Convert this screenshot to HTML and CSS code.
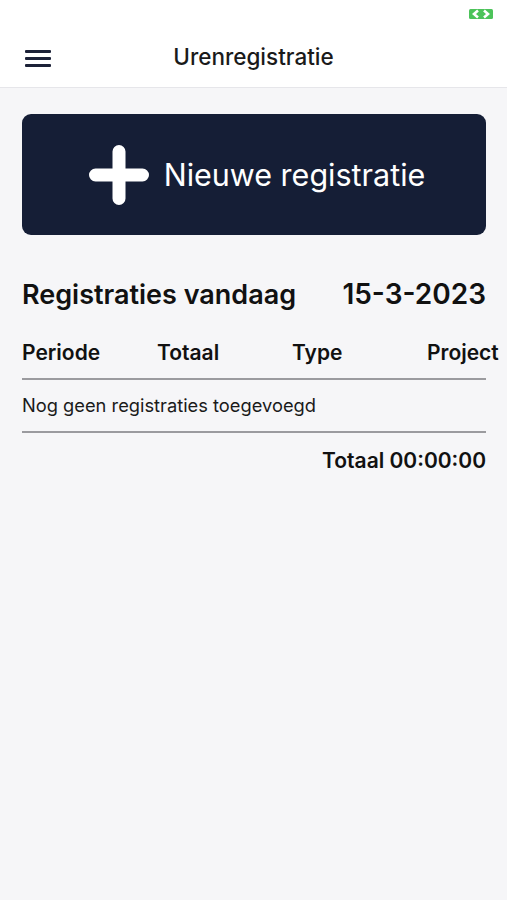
FILE: index.html
```html
<!DOCTYPE html>
<html lang="nl">
<head>
    <meta charset="UTF-8">
    <meta name="viewport" content="width=device-width, initial-scale=1.0">
    <title>Urenregistratie</title>
    <link rel="stylesheet" href="styles.css">
</head>
<body>
    <div id="statusbalk">
        <svg class="batterij" width="24" height="10" viewBox="0 0 24 10">
            <rect x="0" y="0" width="24" height="10" rx="1.5" fill="#4cc35a"/>
            <path d="M9 1.5 L5 5 L9 8.5 M15 1.5 L19 5 L15 8.5" stroke="#fff" stroke-width="2.6" fill="none"/>
        </svg>
    </div>
    <div id="kop">
        <div class="menu">
            <span></span><span></span><span></span>
        </div>
        <h1 id="titel">Urenregistratie</h1>
    </div>
    <div id="inhoud">
        <a id="nieuw">
            <svg class="plus" width="60" height="60" viewBox="0 0 60 60">
                <path d="M30 6.5 V53.5 M6.5 30 H53.5" stroke="#fff" stroke-width="13" stroke-linecap="round"/>
            </svg>
            <span>Nieuwe registratie</span>
        </a>

        <div id="dag">
            <h2>Registraties vandaag</h2>
            <span id="datum">15-3-2023</span>
        </div>

        <div id="kolommen">
            <span>Periode</span>
            <span>Totaal</span>
            <span>Type</span>
            <span>Project</span>
        </div>

        <div id="lijst">
            Nog geen registraties toegevoegd
        </div>

        <div id="totaal">Totaal 00:00:00</div>
    </div>
</body>
</html>
```

FILE: styles.css
```css
* {
    font-family: Inter, "Noto Sans", sans-serif;
    box-sizing: border-box;
}
body {
    margin: 0;
    background-color: #f6f6f8;
    color: #111;
}
#statusbalk {
    height: 30px;
    background-color: #fff;
    display: flex;
    justify-content: flex-end;
    padding: 9px 14px 0 0;
}
#kop {
    position: relative;
    height: 58px;
    background-color: #fff;
    border-bottom: 1px solid #e6e6ea;
    display: flex;
    align-items: center;
    justify-content: center;
    padding-bottom: 4px;
}
.menu {
    position: absolute;
    left: 25px;
    top: 20px;
    width: 26px;
    display: flex;
    flex-direction: column;
    gap: 4.5px;
}
.menu span {
    display: block;
    height: 2.5px;
    background-color: #1c2238;
    border-radius: 1px;
}
#titel {
    margin: 0;
    font-size: 22.5px;
    font-weight: 500;
    color: #1a1a1a;
}
#inhoud {
    padding: 26px 21px 0 22px;
}
#nieuw {
    display: flex;
    align-items: center;
    justify-content: center;
    gap: 15px;
    height: 121px;
    background-color: #151e36;
    border-radius: 9px;
    color: #fff;
    font-size: 30.5px;
    padding-left: 6px;
}
#nieuw .plus {
    margin-top: 1px;
}
#dag {
    display: flex;
    justify-content: space-between;
    align-items: center;
    margin-top: 42px;
}
#dag h2 {
    margin: 0;
    font-size: 27px;
    font-weight: 600;
}
#datum {
    font-size: 28px;
    font-weight: 600;
}
#kolommen {
    display: grid;
    grid-template-columns: 135px 135px 135px auto;
    margin-top: 29px;
    padding-bottom: 13px;
    border-bottom: 2px solid #9b9b9f;
    white-space: nowrap;
}
#kolommen span {
    font-size: 21px;
    font-weight: 600;
}
#lijst {
    font-size: 18.3px;
    padding: 14px 0 15px;
    border-bottom: 2px solid #9b9b9f;
    color: #1a1a1a;
}
#totaal {
    text-align: right;
    font-size: 21px;
    font-weight: 600;
    margin-top: 15px;
}
```
